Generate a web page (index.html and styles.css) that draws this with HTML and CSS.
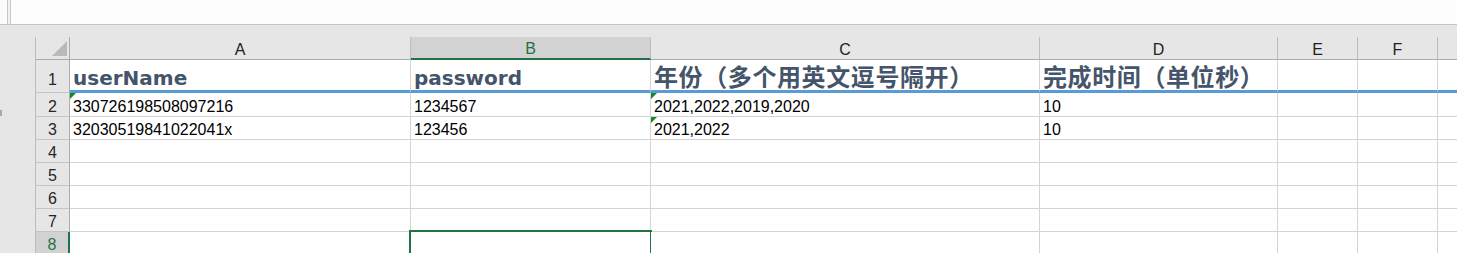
FILE: index.html
```html
<!DOCTYPE html>
<html lang="zh-CN">

<head>
    <meta charset="UTF-8">
    <title>Sheet1</title>
    <link rel="stylesheet" href="styles.css">
</head>

<body>
    <div class="topbar">
        <div class="split"></div>
        <div class="fx"></div>
    </div>
    <div class="grip"></div>
    <div class="sheet">
        <!-- column headers -->
        <div class="ch corner"><div class="tri"></div></div>
        <div class="ch">A</div>
        <div class="ch on">B</div>
        <div class="ch">C</div>
        <div class="ch">D</div>
        <div class="ch">E</div>
        <div class="ch">F</div>
        <div class="ch last"></div>

        <!-- row 1 -->
        <div class="rh r1">1</div>
        <div class="cell r1 t1">userName</div>
        <div class="cell r1 t1">password</div>
        <div class="cell r1 t1 cjk">年份（多个用英文逗号隔开）</div>
        <div class="cell r1 t1 cjk">完成时间（单位秒）</div>
        <div class="cell r1"></div>
        <div class="cell r1"></div>
        <div class="cell r1 last"></div>

        <!-- row 2 -->
        <div class="rh r2">2</div>
        <div class="cell r2"><span class="err"></span>330726198508097216</div>
        <div class="cell r2">1234567</div>
        <div class="cell r2"><span class="err"></span>2021,2022,2019,2020</div>
        <div class="cell r2">10</div>
        <div class="cell r2"></div>
        <div class="cell r2"></div>
        <div class="cell r2 last"></div>

        <!-- row 3 -->
        <div class="rh">3</div>
        <div class="cell">32030519841022041x</div>
        <div class="cell">123456</div>
        <div class="cell"><span class="err"></span>2021,2022</div>
        <div class="cell">10</div>
        <div class="cell"></div>
        <div class="cell"></div>
        <div class="cell last"></div>

        <div class="rh">4</div>
        <div class="cell"></div><div class="cell"></div><div class="cell"></div><div class="cell"></div>
        <div class="cell"></div><div class="cell"></div><div class="cell last"></div>

        <div class="rh">5</div>
        <div class="cell"></div><div class="cell"></div><div class="cell"></div><div class="cell"></div>
        <div class="cell"></div><div class="cell"></div><div class="cell last"></div>

        <div class="rh">6</div>
        <div class="cell"></div><div class="cell"></div><div class="cell"></div><div class="cell"></div>
        <div class="cell"></div><div class="cell"></div><div class="cell last"></div>

        <div class="rh">7</div>
        <div class="cell"></div><div class="cell"></div><div class="cell"></div><div class="cell"></div>
        <div class="cell"></div><div class="cell"></div><div class="cell last"></div>

        <!-- row 8, B8 selected -->
        <div class="rh on">8</div>
        <div class="cell"></div>
        <div class="cell active"><span class="sel"><span class="handle"></span></span></div>
        <div class="cell"></div><div class="cell"></div>
        <div class="cell"></div><div class="cell"></div><div class="cell last"></div>
    </div>
</body>

</html>
```

FILE: styles.css
```css
* {
    box-sizing: border-box;
}

html,
body {
    margin: 0;
    height: 253px;
    overflow: hidden;
}

body {
    position: relative;
    background-color: #e6e6e6;
    font-family: "Liberation Sans", Arial, sans-serif;
    font-size: 16px;
    color: #000;
}

/* formula bar strip */
.topbar {
    display: flex;
    height: 25px;
    padding-left: 7px;
    background-color: #fcfcfc;
    border-bottom: 1px solid #c6c6c6;
}

.topbar .split {
    width: 4px;
    background-color: #f3f3f3;
    border-left: 1px solid #c8c8c8;
    border-right: 1px solid #c8c8c8;
}

.topbar .fx {
    flex: 1;
    background-color: #fdfdfd;
}

.grip {
    position: absolute;
    left: 0;
    top: 110px;
    width: 2px;
    height: 6px;
    background-color: #a8a8a8;
}

/* the grid */
.sheet {
    display: grid;
    grid-template-columns: 35px 341px 240px 389px 238px 80px 80px 1fr;
    grid-template-rows: 23px 33px 24px repeat(6, 23px);
    margin: 12px 0 0 35px;
}

.ch {
    display: flex;
    justify-content: center;
    align-items: flex-end;
    line-height: 18px;
    border-right: 1px solid #bdbdbd;
    border-bottom: 1px solid #ababab;
    color: #222;
}

.ch.on {
    background-color: #d2d2d2;
    color: #217346;
    border-bottom: 2px solid #217346;
}

.ch.last {
    border-right: 0;
}

.corner {
    justify-content: flex-end;
    padding: 0 2px 3px 0;
    border-left: 1px solid #bdbdbd;
    border-right-color: #ababab;
}

.corner .tri {
    width: 15px;
    height: 15px;
    background-color: #b9b9b9;
    clip-path: polygon(100% 0, 100% 100%, 0 100%);
}

.rh {
    display: flex;
    justify-content: center;
    align-items: flex-end;
    line-height: 18px;
    border-left: 1px solid #bdbdbd;
    border-right: 1px solid #ababab;
    border-bottom: 1px solid #c4c4c4;
    color: #262626;
}

.rh.r1 {
    padding-bottom: 3px;
}

.rh.on {
    background-color: #d2d2d2;
    color: #217346;
    border-right: 2px solid #217346;
}

.cell {
    position: relative;
    display: flex;
    align-items: flex-end;
    padding-left: 3px;
    line-height: 18px;
    white-space: nowrap;
    background-color: #fff;
    border-right: 1px solid #d4d4d4;
    border-bottom: 1px solid #d4d4d4;
}

.cell.last {
    border-right: 0;
}

.cell.r1 {
    border-bottom: 3px solid #5b9bd5;
}

.t1 {
    font-family: "DejaVu Sans", sans-serif;
    font-weight: bold;
    font-size: 20px;
    line-height: 24px;
    color: #44546a;
}

.t1.cjk {
    font-family: "Noto Sans CJK SC", sans-serif;
    font-size: 24px;
    line-height: 28px;
    padding-left: 3px;
    letter-spacing: 0.6px;
}

.err {
    position: absolute;
    left: 0;
    top: 0;
    width: 6px;
    height: 6px;
    background-color: #138a24;
    clip-path: polygon(0 0, 100% 0, 0 100%);
}

.active {
    border-bottom: 0;
}

.sel {
    position: absolute;
    left: -2px;
    top: -2px;
    right: -2px;
    bottom: -2px;
    border: 2px solid #217346;
}

.handle {
    position: absolute;
    right: -5px;
    bottom: -5px;
    width: 7px;
    height: 7px;
    background-color: #217346;
    border: 1px solid #fff;
}
```
